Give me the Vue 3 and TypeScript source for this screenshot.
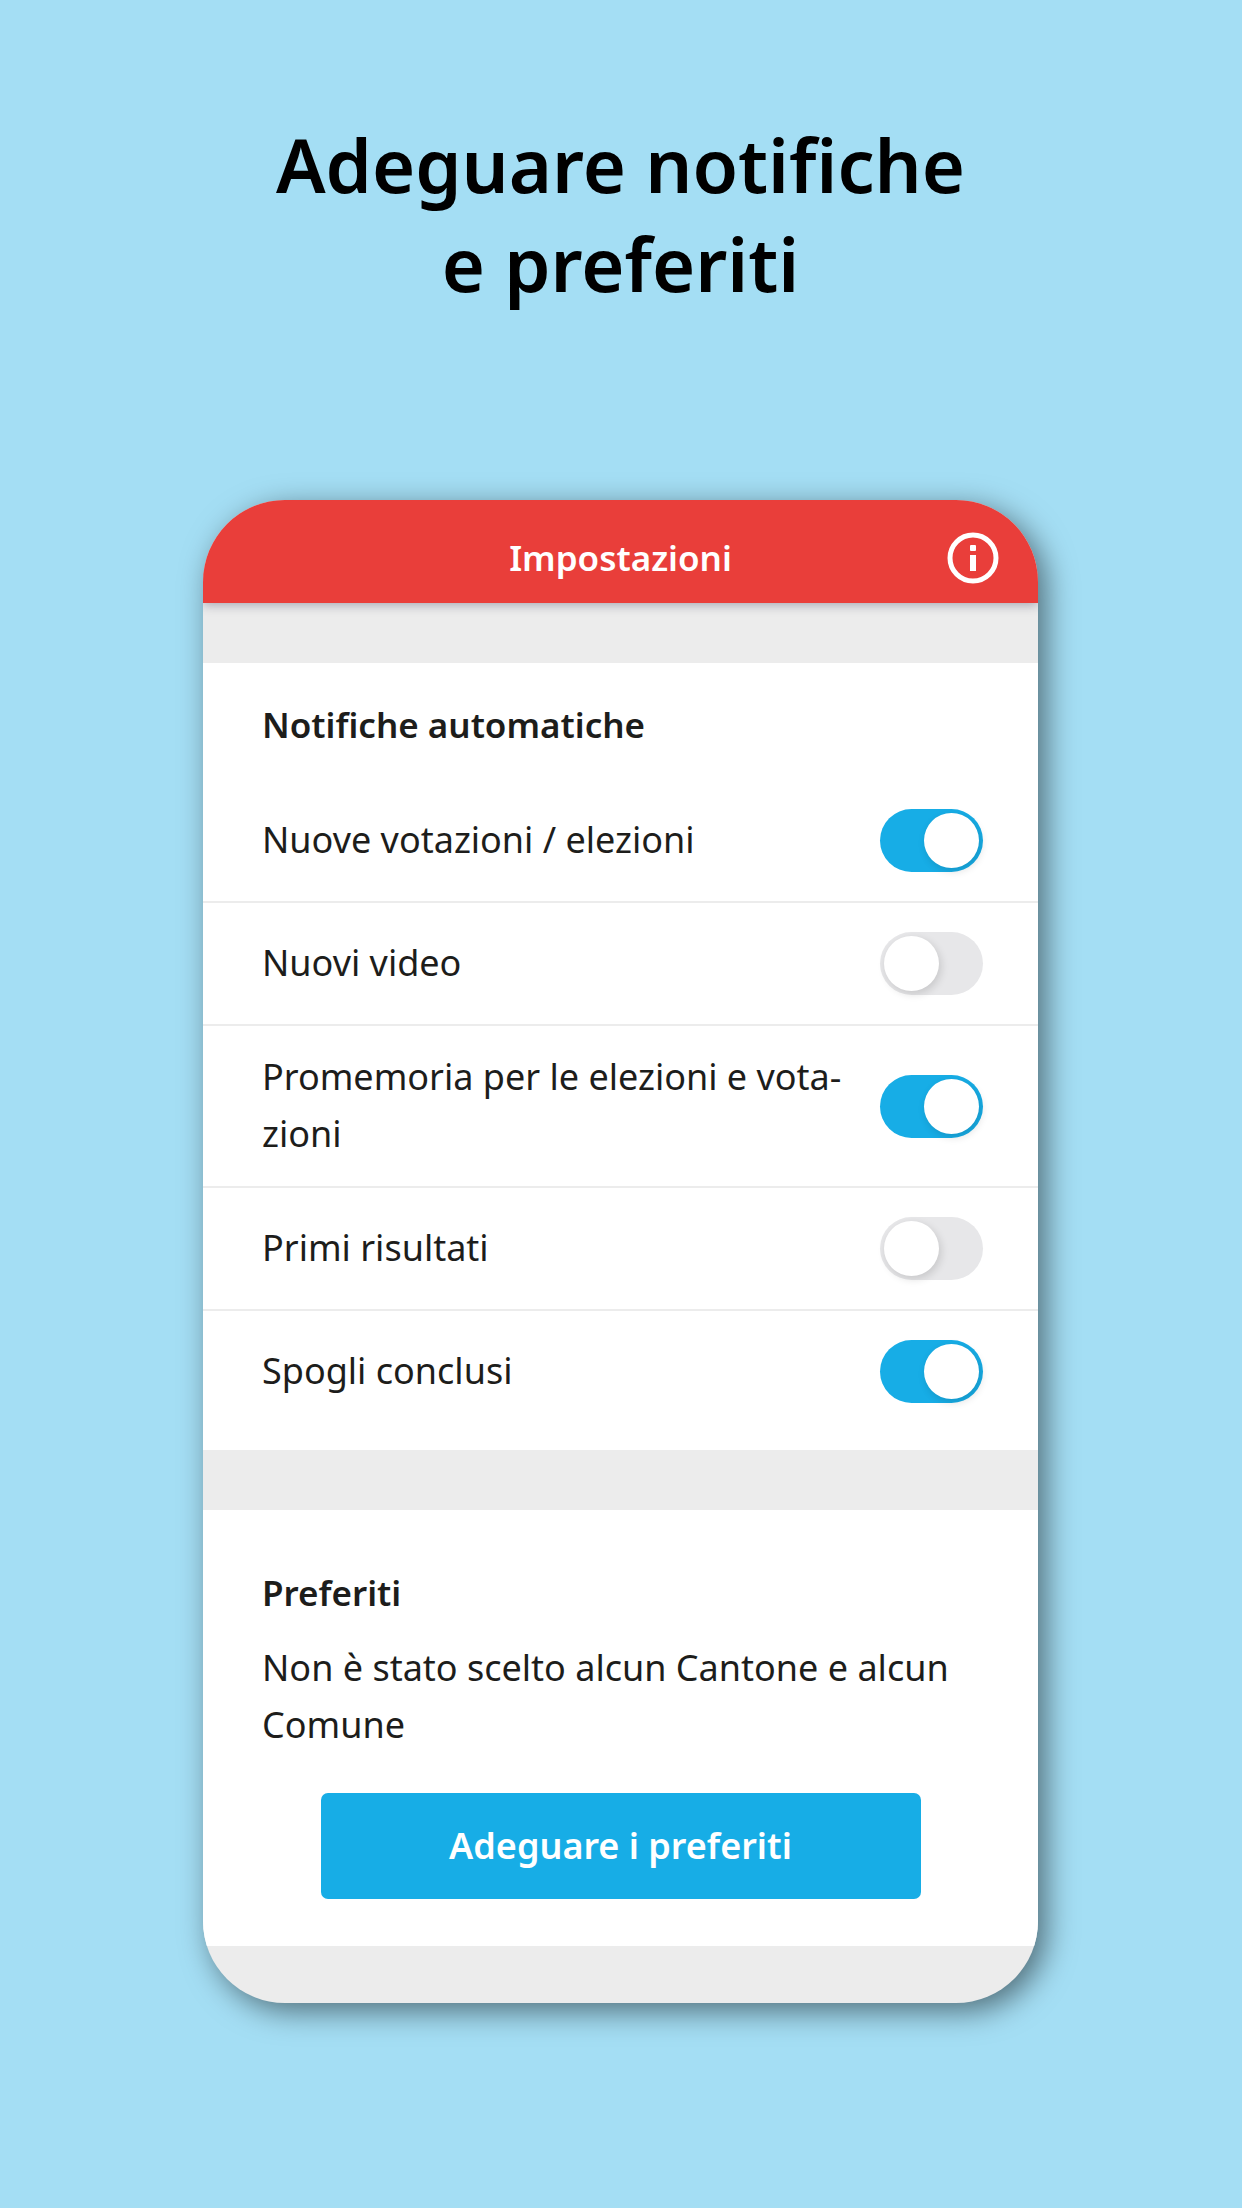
<script setup lang="ts">
import { reactive } from 'vue'

interface Setting {
  id: string
  label: string
  enabled: boolean
}

const settings = reactive<Setting[]>([
  { id: 'new-votes', label: 'Nuove votazioni / elezioni', enabled: true },
  { id: 'new-videos', label: 'Nuovi video', enabled: false },
  { id: 'reminders', label: 'Promemoria per le elezioni e vota\u00adzioni', enabled: true },
  { id: 'first-results', label: 'Primi risultati', enabled: false },
  { id: 'final-results', label: 'Spogli conclusi', enabled: true },
])
</script>

<template>
  <main class="page">
    <h1 class="headline">Adeguare notifiche<br />e preferiti</h1>

    <div class="phone">
      <header class="bar">
        <h2 class="bar-title">Impostazioni</h2>
        <button class="info" type="button" aria-label="Informazioni">
          <svg viewBox="0 0 52 52" width="52" height="52" aria-hidden="true">
            <circle cx="26" cy="26" r="23" fill="none" stroke="currentColor" stroke-width="5" />
            <rect x="23" y="13" width="6" height="6" rx="1" fill="currentColor" />
            <rect x="23" y="23" width="6" height="16" fill="currentColor" />
          </svg>
        </button>
      </header>

      <section class="panel notifications">
        <h3 class="section-title">Notifiche automatiche</h3>
        <ul class="list">
          <li v-for="item in settings" :key="item.id" class="row">
            <label class="row-label" :for="item.id">{{ item.label }}</label>
            <input :id="item.id" v-model="item.enabled" class="toggle" type="checkbox" role="switch" />
          </li>
        </ul>
      </section>

      <section class="panel favourites">
        <h3 class="section-title">Preferiti</h3>
        <p class="note">Non è stato scelto alcun Cantone e alcun Comune</p>
        <button class="action" type="button">Adeguare i preferiti</button>
      </section>
    </div>
  </main>
</template>

<style>
body {
  background: #a4def4;
}
</style>

<style scoped>
.page {
  box-sizing: border-box;
  min-height: 100vh;
  padding: 115px 204px 205px 203px;
  background: #a4def4;
  color: #1d1d1b;
  font-family: "Noto Sans", "Open Sans", sans-serif;
  font-size: 36px;
  line-height: 57px;
}

h1,
h2,
h3,
p,
ul {
  margin: 0;
  padding: 0;
}

.headline {
  margin-bottom: 187px;
  color: #000;
  font-size: 74px;
  font-weight: 600;
  line-height: 99px;
  text-align: center;
}

.phone {
  display: flex;
  flex-direction: column;
  gap: 60px;
  padding-bottom: 57px;
  overflow: hidden;
  border-radius: 82px;
  background: #ececec;
  box-shadow: 8px 8px 30px rgba(0, 0, 0, 0.5);
}

.bar {
  display: grid;
  grid-template-columns: 1fr auto 1fr;
  align-items: center;
  box-sizing: border-box;
  height: 103px;
  padding: 12px 39px 0;
  background: #e93e3a;
  box-shadow: 0 2px 10px rgba(60, 60, 90, 0.4);
  color: #fff;
}

.bar-title {
  grid-column: 2;
  font-size: 35px;
  font-weight: 600;
}

.info {
  display: flex;
  justify-self: end;
  padding: 0;
  border: 0;
  background: none;
  color: #fff;
  cursor: pointer;
}

.panel {
  background: #fff;
}

.section-title {
  font-size: 35px;
  font-weight: 600;
}

.notifications {
  padding: 33px 0 18px;
}

.notifications .section-title {
  padding: 0 59px;
  margin-bottom: 27px;
}

.list {
  list-style: none;
}

.row {
  display: flex;
  align-items: center;
  justify-content: space-between;
  gap: 24px;
  min-height: 121px;
  padding: 0 55px 0 59px;
  border-bottom: 2px solid #ececec;
}

.row:last-child {
  border-bottom: 0;
}

.row-label {
  padding: 22px 0 24px;
  hyphens: manual;
}

.toggle {
  display: flex;
  flex: none;
  box-sizing: border-box;
  width: 103px;
  height: 63px;
  margin: 0;
  padding: 4px;
  appearance: none;
  border-radius: 32px;
  background: #e7e7e9;
  cursor: pointer;
}

.toggle::before {
  content: "";
  width: 55px;
  height: 55px;
  border-radius: 50%;
  background: #fff;
  box-shadow: 2px 3px 8px rgba(0, 0, 0, 0.14);
}

.toggle:checked {
  justify-content: flex-end;
  background: #17ade6;
}

.favourites {
  display: flex;
  flex-direction: column;
  padding: 54px 59px 47px;
}

.note {
  margin: 18px 0 40px;
}

.action {
  align-self: center;
  width: 600px;
  max-width: 100%;
  padding: 24px 0 25px;
  border: 0;
  border-radius: 7px;
  background: #17ade6;
  color: #fff;
  font: inherit;
  font-weight: 600;
  cursor: pointer;
}
</style>
